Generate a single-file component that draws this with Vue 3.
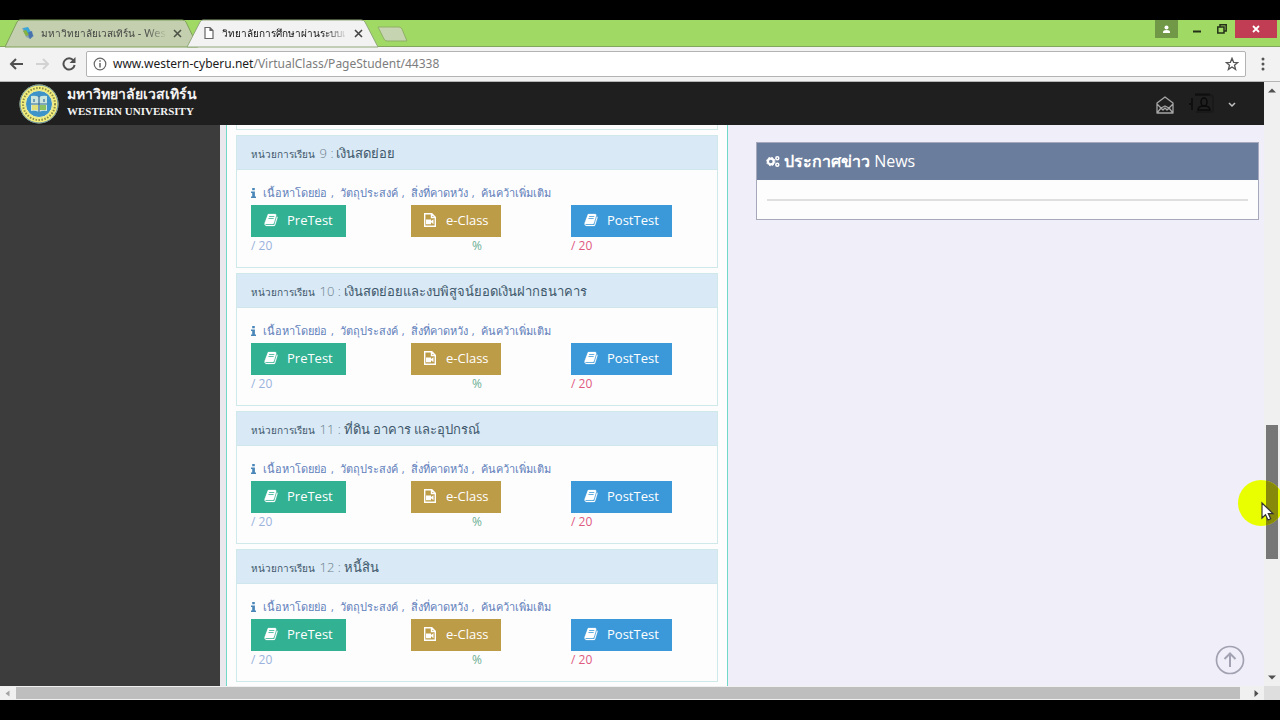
<script setup>
import { ref } from 'vue'

const address = ref('www.western-cyberu.net/VirtualClass/PageStudent/44338')
const topics = ['เนื้อหาโดยย่อ', 'วัตถุประสงค์', 'สิ่งที่คาดหวัง', 'ค้นคว้าเพิ่มเติม']
const units = [
  { no: 9, title: 'เงินสดย่อย' },
  { no: 10, title: 'เงินสดย่อยและงบพิสูจน์ยอดเงินฝากธนาคาร' },
  { no: 11, title: 'ที่ดิน อาคาร และอุปกรณ์' },
  { no: 12, title: 'หนี้สิน' },
]
const bookPath = 'M1639 478q40 57 18 129l-275 906q-19 64-76.500 107.500T1183 1664H260q-77 0-148.500-53.500T12 1479q-24-67-2-127 0-4 3-27t4-37q1-8-3-21.500t-3-19.500q2-11 8-21t16.500-23.500T52 1179q23-38 45-91.500t30-91.500q3-10 .5-30t-.5-28q3-11 17-28t17-23q21-36 42-92t25-90q1-9-2.500-32t.5-28q4-13 22-30.500t22-22.500q19-26 42.500-84.500T340 411q1-8-3-25.500t-2-26.500q2-8 9-18t18-23 17-21q8-12 16.500-30.500t15-35 16-36 19.500-32T472.500 140t36-11.500T556 134l-1 3q38-9 51-9h761q74 0 114 56t18 130l-274 906q-36 119-71.500 153.500T1025 1408H156q-27 0-38 15-11 16-1 43 24 70 144 70h923q29 0 56-15.500t35-41.500l300-987q7-22 5-57 38 15 59 43zm-1064 2q-4 13 2 22.500t20 9.500h608q13 0 25.500-9.500T1247 480l21-64q4-13-2-22.500t-20-9.500H638q-13 0-25.500 9.500T596 416zm-83 256q-4 13 2 22.500t20 9.500h608q13 0 25.500-9.500T1164 736l21-64q4-13-2-22.500t-20-9.500H555q-13 0-25.500 9.500T513 672z'
</script>

<template>
  <div class="screen">
    <header class="tabstrip">
      <svg class="tabshape" width="400" height="27" viewBox="0 0 400 27" aria-hidden="true">
        <path d="M5 27 L17 2 Q18 0 20 0 H182 Q185 0 186 2 L198 27Z" fill="#c3cfae" stroke="#7fa159" />
        <path d="M187 27 L200 2 Q201 0 203 0 H361 Q364 0 365 2 L378 27Z" fill="#f2f2f2" stroke="#91a87a" />
        <path d="M378 7 H399 Q401 7 402 9 L407 21 H387 Q385 21 384 19Z" fill="#c6d4b1" stroke="#8fb165" />
      </svg>
      <button class="tab">
        <svg width="14" height="14" viewBox="0 0 14 14"><path d="M1 2l6 0 6 8-4 3-4-2z" fill="#8aa5b5"/><path d="M2 2l5-1 3 5-4 3z" fill="#3aa6d8"/><path d="M6 7l5-2 1 5-3 3z" fill="#4772ae"/><path d="M2 5l3 5 3-1-3-5z" fill="#84b33e"/></svg>
        <span class="tabname"><span class="th">มหาวิทยาลัยเวสเทิร์น</span> - Wes</span>
        <svg width="9" height="9" viewBox="0 0 9 9"><path d="M1 1l7 7M8 1L1 8" stroke="#4d5347" stroke-width="1.600"/></svg>
      </button>
      <button class="tab">
        <svg width="14" height="14" viewBox="0 0 14 14"><path d="M3 1.500h5l3 3v8H3zM8 1.500v3h3" fill="#fff" stroke="#666" stroke-width="1.200"/></svg>
        <span class="tabname active"><span class="th">วิทยาลัยการศึกษาผ่านระบบเ</span></span>
        <svg width="9" height="9" viewBox="0 0 9 9"><path d="M1 1l7 7M8 1L1 8" stroke="#444" stroke-width="1.600"/></svg>
      </button>
      <div class="winbtns">
        <button class="person" aria-label="Profile"><svg width="9" height="9" viewBox="0 0 9 9"><circle cx="4.500" cy="2.500" r="2" fill="#fff"/><path d="M1 8V7Q1 5 4.500 5T8 7V8Z" fill="#fff"/></svg></button>
        <button class="win" aria-label="Minimize"><svg width="10" height="10" viewBox="0 0 10 10"><path d="M1 7.500h8" stroke="#243018" stroke-width="2"/></svg></button>
        <button class="win" aria-label="Restore"><svg width="10" height="10" viewBox="0 0 10 10"><path d="M.8 3h6.200v6H.8zM3 3V.800h6.200V7H7" fill="none" stroke="#243018" stroke-width="1.500"/></svg></button>
        <button class="close" aria-label="Close"><svg width="8" height="8" viewBox="0 0 8 8"><path d="M1 1l6 6M7 1L1 7" stroke="#fff" stroke-width="1.800"/></svg></button>
      </div>
    </header>

    <div class="toolbar">
      <button class="nav" aria-label="Back"><svg width="16" height="14" viewBox="0 0 16 14"><path d="M14 7H2M7 2L2 7l5 5" fill="none" stroke="#505050" stroke-width="2"/></svg></button>
      <button class="nav" aria-label="Forward"><svg width="16" height="14" viewBox="0 0 16 14"><path d="M1 7h12M8 2l5 5-5 5" fill="none" stroke="#d2d2d2" stroke-width="2"/></svg></button>
      <button class="nav reload" aria-label="Reload"><svg width="14" height="14" viewBox="0 0 14 14"><path d="M11.500 3.500A5.600 5.600 0 1 0 12.600 8" fill="none" stroke="#505050" stroke-width="2"/><path d="M13.500 0v6h-6z" fill="#505050"/></svg></button>
      <div class="omnibox">
        <svg width="14" height="14" viewBox="0 0 14 14"><circle cx="7" cy="7" r="5.800" fill="none" stroke="#666" stroke-width="1.200"/><path d="M7 6v4.500M7 3.300v1.500" stroke="#666" stroke-width="1.500"/></svg>
        <label class="url">
          <input v-model="address" class="urlinput" aria-label="Address" />
          <span class="urltext" aria-hidden="true"><b>www.western-cyberu.net</b>/VirtualClass/PageStudent/44338</span>
        </label>
        <svg width="14" height="14" viewBox="0 0 14 14"><path d="M7 1.300l1.600 4 4.200.2-3.300 2.700 1.100 4.200L7 10l-3.600 2.400 1.100-4.200L1.200 5.500l4.200-.2z" fill="none" stroke="#555" stroke-width="1.300"/></svg>
      </div>
      <button class="menu" aria-label="Menu"><svg width="4" height="14" viewBox="0 0 4 14"><g fill="#555"><circle cx="2" cy="2" r="1.500"/><circle cx="2" cy="7" r="1.500"/><circle cx="2" cy="12" r="1.500"/></g></svg></button>
    </div>

    <div class="viewport">
      <div class="page">
        <div class="topbar">
          <svg class="logo" width="40" height="40" viewBox="0 0 40 40">
            <circle cx="20" cy="20" r="19.500" fill="#f3ef7c"/>
            <circle cx="20" cy="20" r="19" fill="none" stroke="#5d87a8" stroke-width="1"/>
            <circle cx="20" cy="20" r="16" fill="none" stroke="#8b8b4a" stroke-width="2" stroke-dasharray="1.500 1.500"/>
            <circle cx="20" cy="20" r="13.500" fill="#3e94c8" stroke="#f4f0a1"/>
            <path d="M12 12q4-1 8 1 4-2 8-1v15q-4-1-8 1-4-2-8-1z" fill="#cce6dd"/>
            <path d="M20 12v16M12 20h16M15 15v3M25 15v3" stroke="#376c9a" stroke-width="1.200"/>
            <path d="M13 21h6v5h-6z" fill="#e2e07a"/><path d="M21 21h6v5h-6z" fill="#8dc262"/>
          </svg>
          <div class="brand"><span class="brand-th">มหาวิทยาลัยเวสเทิร์น</span><span class="brand-en">WESTERN UNIVERSITY</span></div>
          <button class="icon-btn mail" aria-label="Messages"><svg width="18" height="18" viewBox="0 0 18 18"><path d="M1 7l8-6 8 6v10H1zM1 8l4 4M17 8l-4 4M1 17l4-5 4-2 4 2 4 5M5 12l2 2 2-2 2 2 2-2" fill="none" stroke="#a5a5a5" stroke-width="1.300" stroke-linejoin="round"/></svg></button>
          <button class="icon-btn account" aria-label="Account"><svg width="28" height="24" viewBox="0 0 28 24"><path d="M7 3h15q3 0 3 3v12q0 2-3 2H8" fill="none" stroke="#191919" stroke-width="2"/><path d="M7 2.500h15M4 6v12M1 12h4" stroke="#0f0f0f" stroke-width="2"/><ellipse cx="16" cy="10" rx="3" ry="4" fill="none" stroke="#0a0a0a" stroke-width="1.500"/><path d="M10 18q0-4 6-4t6 4z" fill="none" stroke="#0a0a0a" stroke-width="1.500"/></svg></button>
          <button class="icon-btn" aria-label="Open account menu"><svg width="8" height="6" viewBox="0 0 8 6"><path d="M1 1l3 3 3-3" fill="none" stroke="#c2c2c2" stroke-width="1.500"/></svg></button>
        </div>
        <div class="content">
          <aside class="side"></aside>
          <main class="units">
            <div class="stub"></div>
            <section v-for="u in units" :key="u.no" class="unit">
              <h2 class="unit-head">หน่วยการเรียน <span class="num">{{ u.no }} :</span> <span class="title">{{ u.title }}</span></h2>
              <div class="unit-body">
                <a href="#" class="info">
                  <svg width="5" height="10" viewBox="0 0 5 10"><path d="M1.200 0h2.600v2.300H1.200zM0 3.500h3.900v5H5V10H0V8.500h1.200V5H0z" fill="#4a87b8"/></svg>
                  <span v-for="(t, i) in topics" :key="t">{{ t }}<span v-if="i < topics.length - 1" class="sep">,</span></span>
                </a>
                <div class="actions">
                  <div class="cell">
                    <button class="btn pre"><svg width="14" height="14" viewBox="-64 0 1792 1792"><path :d="bookPath" fill="#fff" stroke="#fff" stroke-width="30"/></svg>PreTest</button>
                    <span class="score blue">/ 20</span>
                  </div>
                  <div class="cell">
                    <button class="btn ecl"><svg width="14" height="14" viewBox="0 0 14 14"><path d="M1.700.7h7.100l3.500 3.500v9.100H1.700zM8.500.7v3.800h3.800" fill="none" stroke="#fff" stroke-width="1.400"/><path d="M3 6.500h5v1.600l2.500-1.900v5L8 9.300v2H3z" fill="#fff"/></svg>e-Class</button>
                    <span class="score green">%</span>
                  </div>
                  <div class="cell">
                    <button class="btn post"><svg width="14" height="14" viewBox="-64 0 1792 1792"><path :d="bookPath" fill="#fff" stroke="#fff" stroke-width="30"/></svg>PostTest</button>
                    <span class="score red">/ 20</span>
                  </div>
                </div>
              </div>
            </section>
          </main>
          <div class="right">
            <section class="news">
              <h2 class="news-head">
                <svg width="14" height="13" viewBox="0 0 14 13"><g fill="none" stroke="#fff"><circle cx="4.800" cy="6.500" r="2.900" stroke-width="2.200"/><circle cx="4.800" cy="6.500" r="4.200" stroke-width="1" stroke-dasharray="1.700 1.600"/><circle cx="11.300" cy="3.200" r="1.500" stroke-width="1.500"/><circle cx="11.300" cy="9.800" r="1.500" stroke-width="1.500"/></g></svg>
                <span><b>ประกาศข่าว</b> News</span>
              </h2>
              <div class="news-body"><hr class="rule" /></div>
            </section>
            <button class="totop" aria-label="Back to top"><svg width="30" height="30" viewBox="0 0 30 30"><circle cx="15" cy="15" r="13.500" fill="none" stroke="#a2a2b2" stroke-width="1.700"/><path d="M15 22V9M9.500 14L15 8.500l5.500 5.500" fill="none" stroke="#a2a2b2" stroke-width="2"/></svg></button>
          </div>
        </div>
      </div>
      <div class="vscroll">
        <svg width="8" height="5" viewBox="0 0 8 5"><path d="M0 4.500L4 .5l4 4z" fill="#505050"/></svg>
        <div class="vtrack"><div class="vthumb"></div></div>
        <svg width="8" height="5" viewBox="0 0 8 5"><path d="M0 .5l4 4 4-4z" fill="#505050"/></svg>
      </div>
    </div>
    <div class="hscroll">
      <svg width="16" height="13" viewBox="0 0 16 13"><path d="M9.500 3.500v6l-4-3z" fill="#a3a3a3"/></svg>
      <div class="hthumb"></div>
      <svg width="24" height="13" viewBox="0 0 24 13"><path d="M14.500 3v7l4-3.500z" fill="#505050"/></svg>
      <div class="corner"></div>
    </div>
    <svg class="pointer" width="46" height="46" viewBox="0 0 46 46" aria-hidden="true"><circle cx="23" cy="23" r="23" fill="#e9ff00"/><path d="M28 0.600A23 23 0 0 1 40 7.500V38.500A23 23 0 0 1 28 45.400Z" fill="#87890a"/><path d="M24 23v15l3.500-3.300 2.500 5.300 2.700-1.200-2.400-5.200h4.700z" fill="#fff" stroke="#333" stroke-width="1.200"/></svg>
  </div>
</template>

<style>
html, body { margin: 0; background: #000; }
</style>

<style scoped>
* { box-sizing: border-box; }
button { border: 0; margin: 0; padding: 0; background: none; font: inherit; color: inherit; }
svg { display: block; flex: none; }
.screen { height: 100vh; padding: 20px 0; background: #000; display: flex; flex-direction: column; position: relative; overflow: hidden; font-family: "Open Sans", "Noto Sans", sans-serif; }
.tabstrip { height: 27px; flex: none; display: flex; position: relative; background: #a0d964; border-bottom: 1px solid #82a65b; padding-left: 21px; }
.tabshape { position: absolute; left: 0; top: 0; overflow: visible; }
.tab { position: relative; flex: none; width: 181px; padding-right: 20px; display: flex; align-items: center; gap: 6px; font: 11px/24px "Noto Sans", sans-serif; color: #444; text-align: left; }
.tabname { flex: 1; min-width: 0; white-space: nowrap; mask-image: linear-gradient(90deg, #000 82%, transparent); }
.tabname.active { color: #111; }
.th { font-size: 10px; }
.winbtns { margin-left: auto; display: flex; align-items: flex-start; height: 18px; }
.winbtns button { height: 18px; display: grid; place-items: center; }
.person { width: 23px; background: #709847; margin-right: 6px; }
.win { width: 25px; }
.close { width: 42px; background: #c03d53; margin: 0 3px 0 1px; }
.toolbar { height: 35px; flex: none; display: flex; align-items: center; background: #f2f2f2; border-bottom: 1px solid #b5b5b5; padding-left: 9px; }
.nav { width: 26px; display: flex; }
.reload { width: 25px; padding-left: 1px; }
.omnibox { flex: 1; height: 26px; display: flex; align-items: center; gap: 6px; background: #fff; border: 1px solid #b3b3b3; border-radius: 2px; padding: 0 6px; }
.url { flex: 1; display: grid; font: 12px/20px "Noto Sans", sans-serif; }
.urlinput, .urltext { grid-area: 1 / 1; font: inherit; padding: 0; }
.urlinput { border: 0; background: none; color: transparent; width: 100%; outline: 0; }
.urltext { color: #7d7d7d; pointer-events: none; white-space: nowrap; }
.urltext b { font-weight: 400; color: #1b1b1b; }
.menu { width: 34px; display: grid; place-items: center; }
.viewport { flex: 1; min-height: 0; display: flex; }
.page { flex: 1; min-width: 0; display: flex; flex-direction: column; background: #f0eff9; }
.topbar { height: 43px; flex: none; display: flex; align-items: center; background: #1f1f1f; padding: 0 28px 0 19px; gap: 8px; }
.brand { display: flex; flex-direction: column; color: #f3f3f3; margin-right: auto; padding-bottom: 6px; }
.brand-th { font: bold 14px/20px "Noto Sans", sans-serif; }
.brand-en { font: bold 11px/14px "Liberation Serif", serif; }
.icon-btn { padding-top: 3px; }
.mail { margin-right: 6px; }
.account { margin-right: 4px; padding: 0; }
.content { flex: 1; min-height: 0; display: flex; overflow: hidden; }
.side { width: 220px; flex: none; background: #3c3c3c; }
.units { width: 502px; flex: none; margin-left: 6px; background: #fdfdfe; border: solid #72d8c8; border-width: 0 1px; padding: 0 9px; display: flex; flex-direction: column; gap: 5px; box-shadow: -6px 0 #e8e8ed; }
.stub { height: 5px; flex: none; border: 1px solid #d3eaea; border-top: 0; }
.unit { height: 133px; flex: none; border: 1px solid #cfe8ea; background: #fdfdfe; }
.unit-head { margin: 0; height: 34px; background: #d9e9f5; border-bottom: 1px solid #d0e6ed; padding: 0 14px; font-size: 10px; line-height: 34px; font-weight: 400; color: #40586c; white-space: nowrap; }
.num { font-weight: 300; font-size: 13px; color: #6b7f8c; margin-left: 2px; }
.title { font-size: 13px; }
.unit-body { padding: 12px 14px 0; }
.info { display: flex; align-items: center; height: 21px; margin-bottom: 2px; font-size: 11px; line-height: 20px; color: #5f80ba; text-decoration: none; white-space: nowrap; }
.info svg { margin-right: 7px; }
.sep { padding: 0 6px 0 4px; }
.actions { display: grid; grid-template-columns: repeat(3, 160px); }
.cell { display: flex; flex-direction: column; align-items: flex-start; }
.btn { height: 32px; display: flex; align-items: center; gap: 9px; padding: 0 13px 2px; color: #fff; font-size: 13px; }
.pre { background: #32b193; }
.ecl { background: #bd9c48; padding: 0 12px 2px; }
.post { background: #3b99d9; }
.score { font-size: 12px; line-height: 18px; }
.blue { color: #9ab3dc; }
.green { color: #6daf93; padding-left: 61px; }
.red { color: #df5a7e; }
.right { flex: 1; position: relative; padding: 17px 5px 0 28px; }
.news { border: 1px solid #a5a9bb; background: #fdfdfe; }
.news-head { margin: 0; height: 37px; display: flex; align-items: center; gap: 4px; padding: 0 9px 1px; background: #6b7d9c; color: #fff; font-size: 16px; font-weight: 400; white-space: nowrap; }
.news-head b { font-weight: 600; }
.news-body { padding: 19px 10px 18px; }
.rule { margin: 0; border: 0; height: 2px; background: #dfdfdf; }
.totop { position: absolute; right: 19px; bottom: 11px; }
.vscroll { width: 16px; flex: none; background: #f0f0f0; display: flex; flex-direction: column; align-items: center; padding: 6px 0; }
.vtrack { flex: 1; width: 100%; padding: 0 2px; display: flex; flex-direction: column; }
.vthumb { margin-top: 332px; height: 134px; background: #777; }
.hscroll { height: 14px; flex: none; display: flex; align-items: center; background: #f0f0f0; }
.hthumb { flex: 1; height: 12px; background: #bebebe; }
.corner { width: 16px; height: 14px; background: #dedede; }
.pointer { position: absolute; right: -4px; bottom: 194px; }
</style>
